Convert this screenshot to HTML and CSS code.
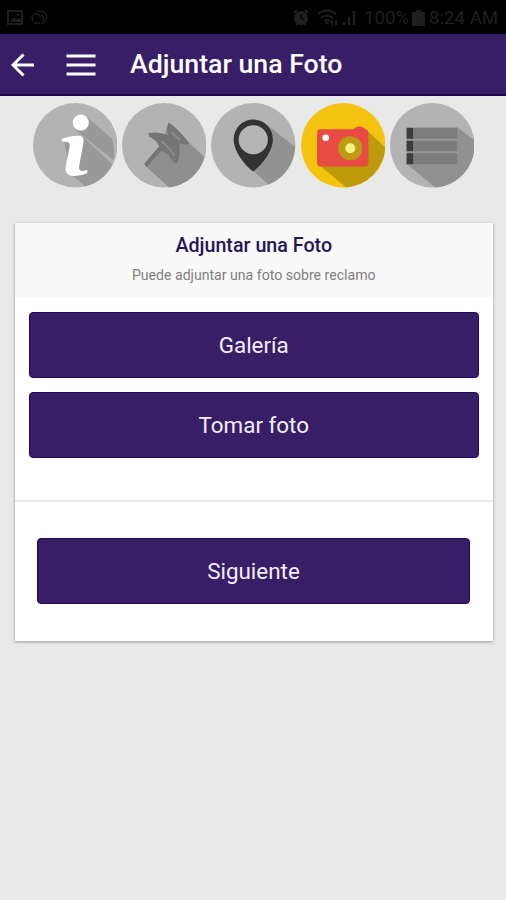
FILE: index.html
```html
<!DOCTYPE html>
<html lang="es">
<head>
  <meta charset="UTF-8">
  <meta name="viewport" content="width=device-width, initial-scale=1.0">
  <title>Adjuntar una Foto</title>
  <link rel="stylesheet" href="styles.css">
</head>
<body>

<div class="status-bar">
  <svg class="status-left" width="44" height="20" viewBox="0 0 44 20">
    <rect x="1" y="3" width="14" height="13" fill="none" stroke="currentColor" stroke-width="2"/>
    <path d="M3 14l4-5 3 3 2-2 3 4z" fill="currentColor"/>
    <circle cx="11" cy="7" r="1.3" fill="currentColor"/>
    <path d="M27 13a4 4 0 1 1 6-4M29 4q8-3 11 4-1 6-6 8M34 7q4 2 2 6M27 15h6" fill="none" stroke="currentColor" stroke-width="1.3"/>
  </svg>
  <div class="status-right">
    <svg class="status-icons" width="66" height="20" viewBox="0 0 66 20">
      <circle cx="8" cy="10" r="7" fill="currentColor"/>
      <path d="M1 5l3-3M15 5l-3-3M3 17l2-2M13 17l-2-2" stroke="currentColor" stroke-width="2"/>
      <path d="M8 6v4l3 2" fill="none" stroke="#000" stroke-width="1.3"/>
      <path d="M25 6q9-7 18 0M28 10q6-5 12 0M31 13q3-2 6 0" fill="none" stroke="currentColor" stroke-width="2"/>
      <circle cx="34" cy="15" r="1.6" fill="currentColor"/>
      <path d="M39 17v-5M43 12v5" stroke="currentColor" stroke-width="2"/>
      <path d="M51 17v-3M56 17V9M61 17V3" stroke="currentColor" stroke-width="2.5"/>
    </svg>
    <span class="battery-text">100%</span>
    <svg class="battery" width="13" height="18" viewBox="0 0 13 18">
      <path d="M4 1h5v2h3q1 0 1 1v12q0 1-1 1H1q-1 0-1-1V4q0-1 1-1h3z" fill="currentColor"/>
    </svg>
    <span class="clock">8:24 AM</span>
  </div>
</div>

<div class="toolbar">
  <svg class="back" width="24" height="24" viewBox="0 0 24 24">
    <path d="M12.5 1.5L2 12l10.500 10.500M2 12h21" fill="none" stroke="#fff" stroke-width="3"/>
  </svg>
  <svg class="menu" width="30" height="22" viewBox="0 0 30 22">
    <path d="M.5 2h29M.5 11h29M.5 20h29" stroke="#fff" stroke-width="3"/>
  </svg>
  <h1>Adjuntar una Foto</h1>
</div>

<div class="steps">
  <svg class="step" viewBox="0 0 84 84">
    <circle cx="42" cy="42" r="42" fill="#b3b3b3"/>
    <path d="M53.500 14L78.500 35.500A42 42 0 0 1 80 57L50 33 42 26z" fill="#999"/>
    <path d="M50 34L79 61A42 42 0 0 1 52 83L38 71 31 40z" fill="#999"/>
    <circle cx="47.500" cy="19.500" r="8" fill="#fff"/>
    <path d="M28.500 35.500Q38 32 46 32.500 51.500 33 50 40L46 62Q45 68 49 67.500L54 66.500V69.500Q47 73 40 72.500 31 72 32.500 63L36.500 43Q37.500 37.500 29 38.500z" fill="#fff"/>
  </svg>
  <svg class="step" viewBox="0 0 84 84">
    <circle cx="42" cy="42" r="42" fill="#b3b3b3"/>
    <path d="M46 20L82 54A42 42 0 0 1 47 84L22.500 62 38 45z" fill="#8f8f8f"/>
    <path d="M46 19.500Q53 23 67 40L64 41.500 57 40Q58 51 55 60.500 50 59 46 51L39 47.500 24.500 63.500 22 60.500 37 43Q35 37 27 33.500L26 30Q36 28 46 32 44 26 46 19.500z" fill="#757575"/>
    <path d="M49 29L58 37M39 38Q46 43 52 52" fill="none" stroke="#8c8c8c" stroke-width="2"/>
  </svg>
  <svg class="step" viewBox="0 0 84 84">
    <circle cx="42" cy="42" r="42" fill="#b3b3b3"/>
    <path d="M56 22L83.500 43.500A42 42 0 0 1 57 81L41.500 67z" fill="#919191"/>
    <path d="M42 16.500A19.500 19.500 0 0 1 61.500 36C61.500 49 49 63 42 68 35 63 22.500 49 22.500 36A19.500 19.500 0 0 1 42 16.500z" fill="#333"/>
    <circle cx="42" cy="36.500" r="14.500" fill="#b5b5b5"/>
  </svg>
  <svg class="step" viewBox="0 0 84 84">
    <circle cx="42" cy="42" r="42" fill="#f3c40f"/>
    <path d="M62 24L83.700 44A42 42 0 0 1 45 84L17 61z" fill="#bd9b0a"/>
    <path d="M19 26H52Q58 20 64 26L66 27Q67 28 67 30V60Q67 63 64 63H19Q16 63 16 60V29Q16 26 19 26z" fill="#e84b43"/>
    <circle cx="24.500" cy="34.500" r="3.300" fill="#fff"/>
    <circle cx="49" cy="45" r="12" fill="#bd9b14"/>
    <circle cx="49" cy="45" r="5" fill="#f7f380"/>
  </svg>
  <svg class="step" viewBox="0 0 84 84">
    <circle cx="42" cy="42" r="42" fill="#b3b3b3"/>
    <path d="M67 24L83.700 37A42 42 0 0 1 45 84L17 61z" fill="#919191"/>
    <path d="M16.500 24.500H67V61H16.500z" fill="#989898"/>
    <path d="M23 24.500H67V35.500H23zM23 37.500H67V48H23zM23 50H67V61H23z" fill="#7c7c7c"/>
    <path d="M16.500 24.500H23V35.500H16.500zM16.500 37.500H23V48H16.500zM16.500 50H23V61H16.500z" fill="#3d3d3d"/>
  </svg>
</div>

<div class="card">
  <div class="card-header">
    <h2>Adjuntar una Foto</h2>
    <p>Puede adjuntar una foto sobre reclamo</p>
  </div>
  <div class="card-content">
    <button type="button">Galería</button>
    <button type="button">Tomar foto</button>
  </div>
  <div class="card-footer">
    <button type="button">Siguiente</button>
  </div>
</div>

</body>
</html>
```
FILE: styles.css
```css
/* General Styles */
* {
  box-sizing: border-box;
}
body {
  font-family: Roboto, sans-serif;
  margin: 0;
  min-height: 900px;
  background: #e9e9e9;
}
h1, h2, p {
  margin: 0;
}
/* Status bar */
.status-bar {
  display: flex;
  justify-content: space-between;
  align-items: center;
  height: 34px;
  padding: 2px 7px 0;
  background: #000;
  color: #1f1f1f;
  font-size: 18.7px;
}
.status-right {
  display: flex;
  align-items: center;
}
.status-icons {
  margin-right: 5px;
}
.battery {
  margin: 0 4px 0 3px;
}
.battery-text {
  width: 45px;
}
.clock {
  width: 70px;
  white-space: nowrap;
}
/* Toolbar */
.toolbar {
  display: flex;
  align-items: center;
  height: 62px;
  padding: 0 11px;
  background: #371e66;
  border-bottom: 2px solid #1c0750;
}
.back {
  margin-top: 2px;
}
.menu {
  margin: 2px 34px 0 31px;
}
.toolbar h1 {
  color: #fff;
  font-size: 26.7px;
  font-weight: 500;
  line-height: 32px;
  white-space: nowrap;
}
/* Steps */
.steps {
  display: flex;
  justify-content: center;
  gap: 4.8px;
  padding: 7px 0 0 1px;
}
.step {
  width: 84.5px;
  height: 84.5px;
}
/* Card */
.card {
  margin: 35.5px 13px 0 14.5px;
  background: #fff;
  box-shadow: 0 1px 3px rgba(0, 0, 0, 0.35);
}
.card-header {
  height: 74px;
  padding-top: 10px;
  background: #f9f9f9;
  text-align: center;
}
.card-header h2 {
  color: #281558;
  font-size: 19.7px;
  font-weight: 500;
  line-height: 26px;
}
.card-header p {
  margin-top: 7px;
  color: #808080;
  font-size: 14.1px;
  line-height: 18px;
}
.card-content {
  display: flex;
  flex-direction: column;
  gap: 14px;
  height: 205px;
  padding: 15px 14px 0;
  border-bottom: 2px solid #e9e9e9;
}
.card-footer {
  height: 138.5px;
  padding: 36px 23px 0 22.5px;
}
.card button {
  width: 100%;
  height: 66px;
  padding: 0;
  background: #371e66;
  border: 1px solid #200a54;
  border-radius: 4px;
  color: #f3effa;
  font-family: inherit;
  font-size: 22.4px;
}
```
